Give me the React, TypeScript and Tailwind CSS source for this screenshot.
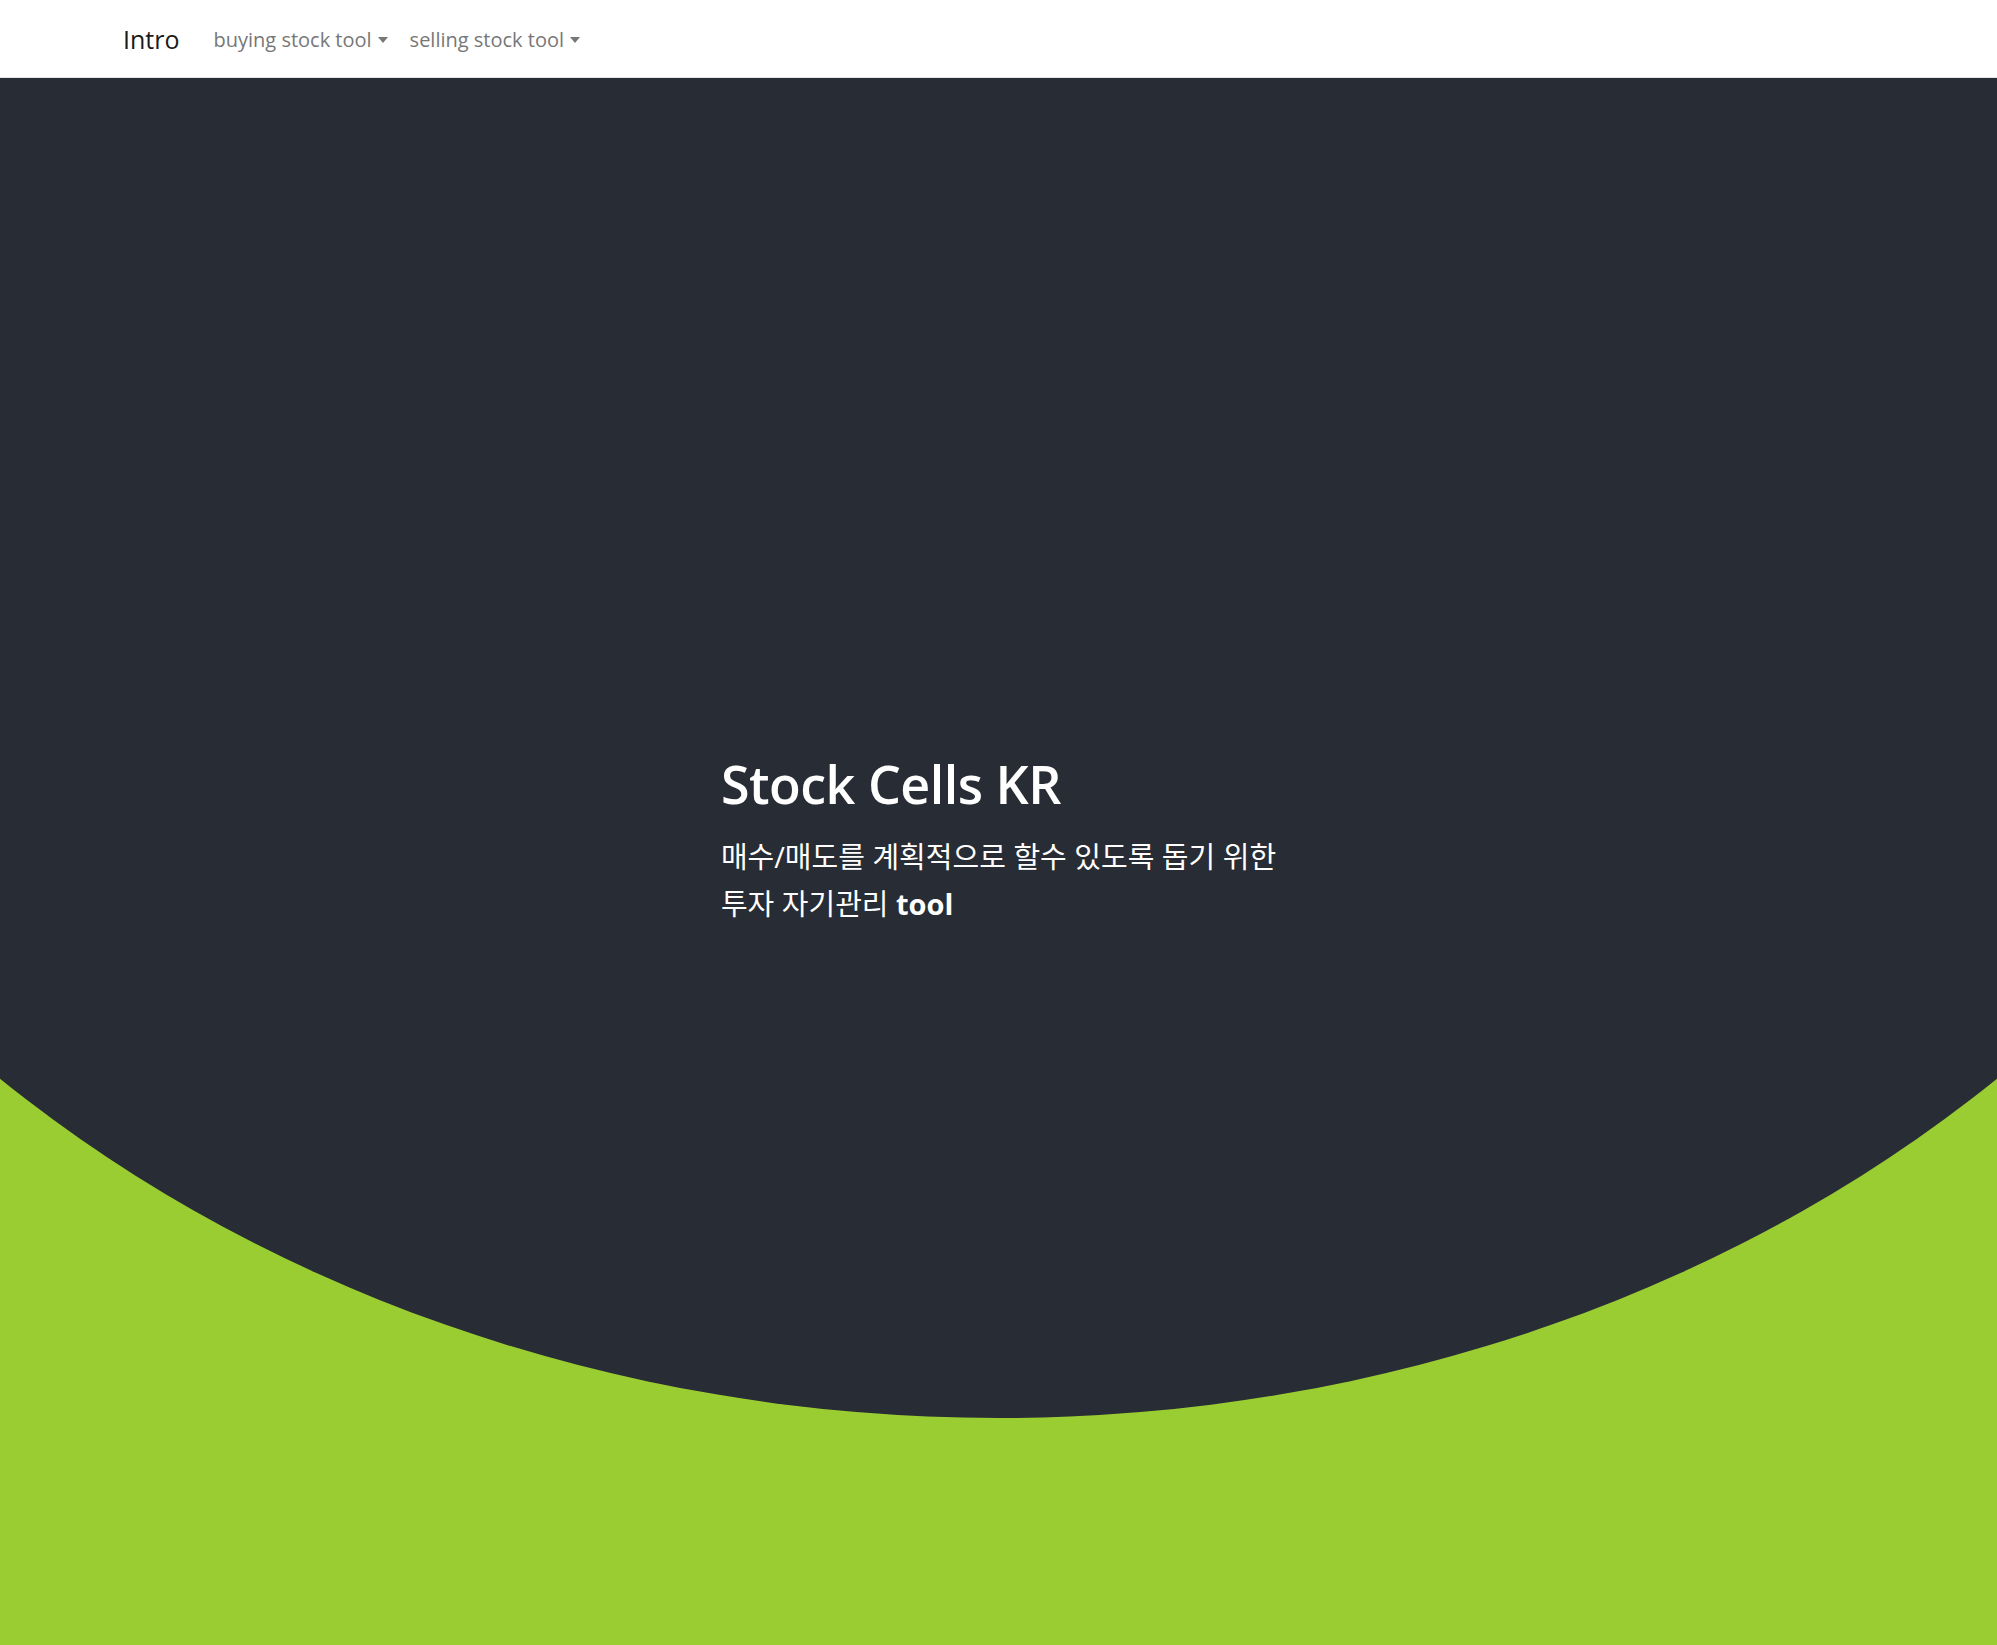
import * as React from "react";

const navLinks = ["buying stock tool", "selling stock tool"];

function Caret() {
  return (
    <span className="ml-[6px] inline-block h-0 w-0 border-x-[5px] border-t-[6px] border-x-transparent border-t-[#777777] align-[4px]" />
  );
}

function NavBar() {
  return (
    <nav className="flex h-[78px] items-center border-b border-[#e4e4e4] bg-white pl-[123px] pt-[2px]">
      <a href="#" className="mr-[23px] text-[25px] text-[#1a1a1a]">
        Intro
      </a>
      <ul className="flex items-center">
        {navLinks.map((label) => (
          <li key={label}>
            <a href="#" className="block px-[11px] text-[20px] text-[#777777]">
              {label}
              <Caret />
            </a>
          </li>
        ))}
      </ul>
    </nav>
  );
}

export default function App() {
  return (
    <div
      className="min-h-[1645px] bg-[#9acd32]"
      style={{ fontFamily: '"Open Sans", "Noto Sans CJK KR", sans-serif' }}
    >
      <NavBar />
      <section className="flex h-[1340px] justify-center bg-[#282c34] pt-[674px] [clip-path:ellipse(1448px_1230px_at_50%_110px)]">
        <div className="pl-[-2px] text-white">
          <h1 className="mb-[18px] text-[52px] font-semibold leading-[63px] tracking-[-0.5px]">
            Stock Cells KR
          </h1>
          <p className="text-[29px] leading-[47px]">
            매수/매도를 계획적으로 할수 있도록 돕기 위한
            <br />
            투자 자기관리 <b className="font-bold">tool</b>
          </p>
        </div>
      </section>
    </div>
  );
}
